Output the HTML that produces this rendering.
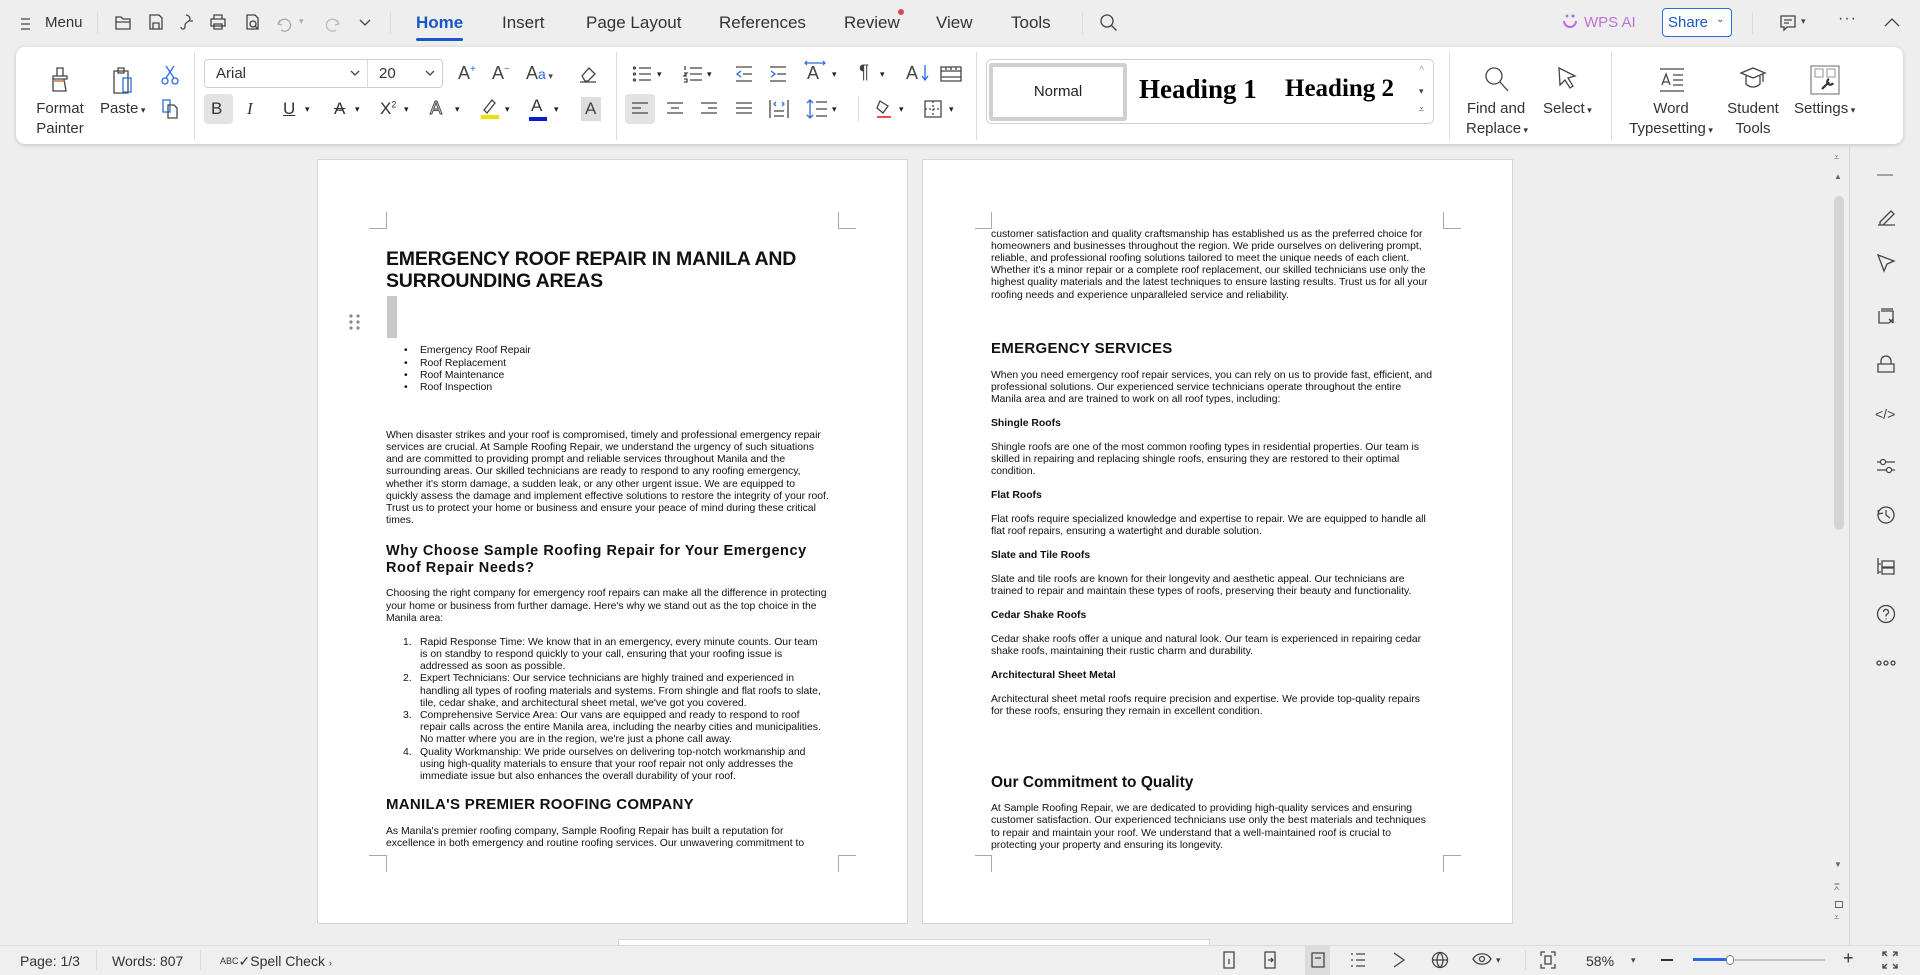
<!DOCTYPE html>
<html><head><meta charset="utf-8"><style>
*{margin:0;padding:0;box-sizing:border-box}
body{width:1920px;height:975px;overflow:hidden;background:#eeeeee;font-family:"Liberation Sans",Arial,sans-serif;color:#222;position:relative}
.a{position:absolute;white-space:nowrap}
.tab{position:absolute;top:13px;font-size:17px;color:#333;line-height:20px}
.rib{position:absolute;left:16px;top:47px;width:1887px;height:97px;background:#fff;border-radius:9px;box-shadow:0 1px 4px rgba(0,0,0,.18)}
.sep{position:absolute;width:1px;background:#dcdcdc}
.lbl{position:absolute;font-size:15px;color:#333;text-align:center;line-height:18px;white-space:nowrap}
.page{position:absolute;background:#fff;border:1px solid #d6d6d6;top:159px;height:765px}
.t{position:absolute;white-space:nowrap;font-size:10.4px;letter-spacing:0px;line-height:12px;color:#111}
.b{font-weight:bold;letter-spacing:0}
.h{position:absolute;white-space:nowrap;font-weight:bold;color:#111}
.cv{position:absolute;background:#a8a8a8}
svg{position:absolute;overflow:visible}
.ic{fill:none;stroke:#444;stroke-width:1.3}
.st{position:absolute;top:952px;font-size:14px;color:#333;line-height:18px}
</style></head><body>

<!-- top bar -->
<svg style="left:20px;top:17px" width="12" height="14" class="ic"><path d="M1 2h9M1 7h9M1 12h9"/></svg>
<div class="a" style="left:45px;top:14px;font-size:15px;color:#333">Menu</div>
<div class="sep" style="left:97px;top:12px;height:22px"></div>
<svg style="left:114px;top:14px" width="18" height="18" class="ic"><path d="M2 3h5l2 2h7v10H2z M2 8h14"/></svg>
<svg style="left:147px;top:13px" width="18" height="18" class="ic"><path d="M3 2h9l3 3v11H3z M6 10h6v6H6z"/></svg>
<svg style="left:178px;top:13px" width="18" height="18" class="ic"><path d="M8 2a4 4 0 0 1 4 4c0 3-5 3-5 6v2a2 2 0 0 1-4 0 M12 8h3"/></svg>
<svg style="left:209px;top:13px" width="18" height="18" class="ic"><path d="M5 2h8v4H5z M2 6h14v7H2z M5 11h8v5H5z"/></svg>
<svg style="left:243px;top:13px" width="18" height="18" class="ic"><path d="M4 2h8l3 3v11H4z"/><circle cx="10" cy="11" r="3"/><path d="M12 13l3 3"/></svg>
<svg style="left:276px;top:14px" width="18" height="18"><path d="M4 6l-2 4 4 1 M3 9a6 6 0 1 1 2 7" fill="none" stroke="#aaa" stroke-width="1.3"/></svg>
<div class="a" style="left:299px;top:16px;font-size:9px;color:#aaa">▾</div>
<svg style="left:323px;top:14px" width="18" height="18"><path d="M14 6l2 4-4 1 M15 9a6 6 0 1 0-2 7" fill="none" stroke="#bbb" stroke-width="1.3"/></svg>
<svg style="left:359px;top:19px" width="12" height="8" class="ic"><path d="M1 1l5 5 5-5"/></svg>
<div class="sep" style="left:390px;top:12px;height:22px"></div>
<div class="tab" style="left:416px;color:#1a56c8;font-weight:bold">Home</div>
<div class="a" style="left:416px;top:38px;width:47px;height:3px;background:#1a56c8;border-radius:2px"></div>
<div class="tab" style="left:502px">Insert</div>
<div class="tab" style="left:586px">Page Layout</div>
<div class="tab" style="left:719px">References</div>
<div class="tab" style="left:844px">Review</div>
<div class="a" style="left:898px;top:9px;width:6px;height:6px;border-radius:3px;background:#e04848"></div>
<div class="tab" style="left:936px">View</div>
<div class="tab" style="left:1011px">Tools</div>
<div class="sep" style="left:1082px;top:12px;height:22px"></div>
<svg style="left:1100px;top:14px" width="18" height="18" class="ic"><circle cx="7" cy="7" r="6"/><path d="M11.5 11.5l5 5"/></svg>
<svg style="left:1562px;top:13px" width="16" height="18"><circle cx="5" cy="3" r="1.5" fill="#d46ad8"/><circle cx="11" cy="3" r="1.5" fill="#a36ae0"/><path d="M2 8a6 6 0 0 0 12 0" fill="none" stroke="#c06ae0" stroke-width="2"/></svg>
<div class="a" style="left:1584px;top:14px;font-size:15px;color:#c070d8">WPS AI</div>
<div class="a" style="left:1662px;top:8px;width:70px;height:29px;border:1px solid #2a6be0;border-radius:4px;background:#fff"></div>
<div class="a" style="left:1668px;top:14px;font-size:15px;color:#1a56c8">Share</div>
<div class="a" style="left:1716px;top:14px;font-size:10px;color:#1a56c8">⌄</div>
<div class="sep" style="left:1752px;top:12px;height:22px"></div>
<svg style="left:1779px;top:14px" width="18" height="18" class="ic"><path d="M2 2h14v11H8l-3 3v-3H2z M5 6h8M5 9h5"/></svg>
<div class="a" style="left:1801px;top:16px;font-size:9px;color:#444">▾</div>
<div class="a" style="left:1838px;top:10px;font-size:16px;color:#444;letter-spacing:1px">···</div>
<svg style="left:1884px;top:17px" width="16" height="10" class="ic"><path d="M1 9l7-7 7 7"/></svg>

<!-- ribbon -->
<div class="rib"></div>
<svg style="left:48px;top:66px" width="24" height="28" class="ic"><path d="M9 2h6v8H9z M5 10h14v3H5z M5 13v12h13l-2-12" /><path d="M6 15h11" stroke="#c0622a"/></svg>
<div class="lbl" style="left:30px;top:100px;width:60px">Format</div>
<div class="lbl" style="left:30px;top:120px;width:60px">Painter</div>
<svg style="left:110px;top:66px" width="26" height="30" class="ic"><path d="M4 5h14v22H4z M8 2h6v5H8z"/><path d="M13 12h8v14h-8z" stroke="#2a6be0"/></svg>
<div class="lbl" style="left:100px;top:100px">Paste<span style="font-size:9px"> ▾</span></div>
<svg style="left:160px;top:64px" width="20" height="22" fill="none" stroke="#2a6be0" stroke-width="1.3"><circle cx="5" cy="17" r="3"/><circle cx="15" cy="17" r="3"/><path d="M6 14L14 2M14 14L6 2"/></svg>
<svg style="left:160px;top:98px" width="20" height="22" class="ic"><path d="M3 2h7v12H3z" stroke="#2a6be0"/><path d="M8 7h6l3 3v10H8z"/></svg>
<div class="sep" style="left:194px;top:52px;height:88px"></div>
<div class="a" style="left:204px;top:59px;width:239px;height:29px;border:1px solid #cfcfcf;border-radius:4px"></div>
<div class="sep" style="left:367px;top:60px;height:27px"></div>
<div class="a" style="left:216px;top:65px;font-size:15px;color:#333">Arial</div>
<div class="a" style="left:379px;top:65px;font-size:15px;color:#333">20</div>
<svg style="left:350px;top:70px" width="10" height="6" class="ic"><path d="M1 1l4 4 4-4"/></svg>
<svg style="left:425px;top:70px" width="10" height="6" class="ic"><path d="M1 1l4 4 4-4"/></svg>
<div class="a" style="left:458px;top:63px;font-size:18px;color:#444">A<sup style="font-size:10px;color:#2a6be0">+</sup></div>
<div class="a" style="left:492px;top:63px;font-size:18px;color:#444">A<sup style="font-size:10px;color:#2a6be0">−</sup></div>
<div class="a" style="left:526px;top:63px;font-size:18px;color:#444">A<span style="font-size:14px;color:#2a6be0">a</span><span style="font-size:9px"> ▾</span></div>
<svg style="left:578px;top:64px" width="20" height="20" class="ic"><path d="M4 12l7-8 6 6-7 7H7z M2 18h16"/></svg>
<div class="a" style="left:204px;top:94px;width:29px;height:30px;background:#e3e3e3;border-radius:4px"></div>
<div class="a" style="left:211px;top:99px;font-size:17px;color:#333">B</div>
<div class="a" style="left:247px;top:99px;font-size:17px;color:#333;font-style:italic;font-family:'Liberation Serif',serif">I</div>
<div class="a" style="left:283px;top:99px;font-size:17px;color:#333;text-decoration:underline">U</div><div class="a" style="left:305px;top:104px;font-size:9px">▾</div>
<div class="a" style="left:334px;top:99px;font-size:17px;color:#333;text-decoration:line-through">A</div><div class="a" style="left:355px;top:104px;font-size:9px">▾</div>
<div class="a" style="left:380px;top:99px;font-size:17px;color:#333">X<sup style="font-size:9px">2</sup></div><div class="a" style="left:404px;top:104px;font-size:9px">▾</div>
<div class="a" style="left:430px;top:98px;font-size:18px;color:#fff;-webkit-text-stroke:1px #444">A</div><div class="a" style="left:455px;top:104px;font-size:9px">▾</div>
<svg style="left:480px;top:96px" width="20" height="24" class="ic"><path d="M4 14l8-10 3 3-8 10z"/><rect x="1" y="19" width="18" height="4" fill="#f0e000" stroke="none"/></svg><div class="a" style="left:505px;top:104px;font-size:9px">▾</div>
<div class="a" style="left:531px;top:96px;font-size:17px;color:#333">A</div><div class="a" style="left:529px;top:117px;width:18px;height:4px;background:#0a1ec8"></div><div class="a" style="left:554px;top:104px;font-size:9px">▾</div>
<div class="a" style="left:581px;top:97px;width:20px;height:24px;background:#ddd"></div><div class="a" style="left:585px;top:99px;font-size:17px;color:#444">A</div>
<div class="sep" style="left:616px;top:52px;height:88px"></div>
<svg style="left:632px;top:65px" width="20" height="18" class="ic"><path d="M7 3h12M7 9h12M7 15h12"/><circle cx="2.5" cy="3" r="1" /><circle cx="2.5" cy="9" r="1"/><circle cx="2.5" cy="15" r="1"/></svg><div class="a" style="left:657px;top:69px;font-size:9px">▾</div>
<svg style="left:683px;top:65px" width="20" height="18" class="ic"><path d="M7 3h12M7 9h12M7 15h12M2 1v4M1 8h3l-3 3h3M1 14h3v3H1"/></svg><div class="a" style="left:707px;top:69px;font-size:9px">▾</div>
<svg style="left:734px;top:65px" width="20" height="18" class="ic"><path d="M2 2h16M9 9h9M2 16h16"/><path d="M7 6l-4 3 4 3" stroke="#2a6be0"/></svg>
<svg style="left:768px;top:65px" width="20" height="18" class="ic"><path d="M2 2h16M9 9h9M2 16h16"/><path d="M3 6l4 3-4 3" stroke="#2a6be0"/></svg>
<div class="a" style="left:807px;top:63px;font-size:18px;color:#444">A</div><svg style="left:804px;top:60px" width="22" height="6"><path d="M1 3h20M3 1L1 3l2 2M19 1l2 2-2 2" fill="none" stroke="#2a6be0" stroke-width="1.2"/></svg><div class="a" style="left:832px;top:69px;font-size:9px">▾</div>
<div class="a" style="left:859px;top:62px;font-size:19px;color:#444">¶</div><div class="a" style="left:880px;top:69px;font-size:9px">▾</div>
<div class="a" style="left:906px;top:63px;font-size:18px;color:#444">A</div><svg style="left:921px;top:64px" width="8" height="18"><path d="M4 1v15M1 12l3 4 3-4" fill="none" stroke="#2a6be0" stroke-width="1.3"/></svg>
<svg style="left:940px;top:66px" width="22" height="16" class="ic"><path d="M1 1h20v14H1z M1 5h20M1 11h20M6 1v3M11 1v3M16 1v3"/></svg>
<div class="a" style="left:625px;top:94px;width:30px;height:30px;background:#e3e3e3;border-radius:4px"></div>
<svg style="left:631px;top:101px" width="18" height="16" class="ic"><path d="M1 2h16M1 7h9M1 12h16"/></svg>
<svg style="left:666px;top:101px" width="18" height="16" class="ic"><path d="M1 2h16M5 7h8M1 12h16"/></svg>
<svg style="left:700px;top:101px" width="18" height="16" class="ic"><path d="M1 2h16M8 7h9M1 12h16"/></svg>
<svg style="left:735px;top:101px" width="18" height="16" class="ic"><path d="M1 2h16M1 7h16M1 12h16"/></svg>
<svg style="left:769px;top:99px" width="20" height="20" class="ic"><path d="M1 1v18M19 1v18M5 12h10M5 17h10"/><path d="M7 3L5 5l2 2M13 3l2 2-2 2" stroke="#2a6be0"/></svg>
<svg style="left:806px;top:98px" width="22" height="22" class="ic"><path d="M10 4h11M10 11h11M10 18h11"/><path d="M4 2v18M1 5l3-3 3 3M1 17l3 3 3-3" stroke="#2a6be0"/></svg><div class="a" style="left:832px;top:104px;font-size:9px">▾</div>
<div class="sep" style="left:858px;top:96px;height:26px"></div>
<svg style="left:874px;top:98px" width="20" height="22" class="ic"><path d="M6 3l8 5-5 7-6-5z"/><path d="M3 19h14" stroke="#e05050" stroke-width="2"/></svg><div class="a" style="left:899px;top:104px;font-size:9px">▾</div>
<svg style="left:924px;top:100px" width="18" height="18" class="ic"><path d="M1 1h16v16H1z"/><path d="M9 1v16M1 9h16" stroke-dasharray="2 2"/></svg><div class="a" style="left:949px;top:104px;font-size:9px">▾</div>
<div class="sep" style="left:976px;top:52px;height:88px"></div>
<div class="a" style="left:986px;top:59px;width:448px;height:65px;border:1px solid #d0d0d0;border-radius:5px"></div>
<div class="a" style="left:989px;top:63px;width:138px;height:58px;border:4px solid #d0d0d0;border-radius:3px"></div>
<div class="a" style="left:989px;top:83px;width:138px;text-align:center;font-size:15px;color:#222">Normal</div>
<div class="a" style="left:1139px;top:74px;font-family:'Liberation Serif',serif;font-weight:bold;font-size:27px;color:#000">Heading 1</div>
<div class="a" style="left:1285px;top:75px;font-family:'Liberation Serif',serif;font-weight:bold;font-size:25px;color:#000">Heading 2</div>
<div class="a" style="left:1419px;top:63px;font-size:9px;color:#999">˄</div>
<div class="a" style="left:1419px;top:86px;font-size:9px;color:#444">▾</div>
<div class="a" style="left:1419px;top:104px;font-size:9px;color:#444">⩡</div>
<div class="sep" style="left:1449px;top:52px;height:88px"></div>
<svg style="left:1484px;top:66px" width="26" height="28" class="ic"><circle cx="10" cy="10" r="8"/><path d="M16 16l8 9"/></svg>
<div class="lbl" style="left:1466px;top:100px;width:60px">Find and</div>
<div class="lbl" style="left:1466px;top:120px;width:60px">Replace<span style="font-size:9px"> ▾</span></div>
<svg style="left:1557px;top:66px" width="22" height="26" class="ic"><path d="M2 2l16 8-7 2 5 8-3 2-5-8-5 5z"/></svg>
<div class="lbl" style="left:1543px;top:100px">Select<span style="font-size:9px"> ▾</span></div>
<div class="sep" style="left:1611px;top:52px;height:88px"></div>
<svg style="left:1659px;top:67px" width="26" height="26" class="ic"><path d="M1 2h24M1 24h24M14 8h10M14 13h10M14 18h10"/><path d="M3 18l4-11 4 11M4 15h6"/></svg>
<div class="lbl" style="left:1631px;top:100px;width:80px">Word</div>
<div class="lbl" style="left:1626px;top:120px;width:90px">Typesetting<span style="font-size:9px"> ▾</span></div>
<svg style="left:1740px;top:66px" width="26" height="26" class="ic"><path d="M1 7l12-5 12 5-12 5z M6 10v8c4 4 10 4 14 0v-8 M23 8v8"/></svg>
<div class="lbl" style="left:1723px;top:100px;width:60px">Student</div>
<div class="lbl" style="left:1723px;top:120px;width:60px">Tools</div>
<svg style="left:1810px;top:65px" width="30" height="30" class="ic"><path d="M1 1h28v28H1z" stroke="#888"/><path d="M5 4h8v8H5zM17 4h8v8h-8z" stroke="#aaa"/><path d="M12 24l7-7M19 14a3 3 0 1 0 4 4" stroke="#333" stroke-width="2.2"/></svg>
<div class="lbl" style="left:1794px;top:100px">Settings<span style="font-size:9px"> ▾</span></div>

<!-- page 1 -->
<div class="page" style="left:317px;width:591px"></div>
<div class="cv" style="left:386px;top:212px;width:1px;height:17px"></div><div class="cv" style="left:369px;top:228px;width:17px;height:1px"></div>
<div class="cv" style="left:838px;top:212px;width:1px;height:17px"></div><div class="cv" style="left:838px;top:228px;width:18px;height:1px"></div>
<div class="cv" style="left:386px;top:855px;width:1px;height:17px"></div><div class="cv" style="left:369px;top:855px;width:17px;height:1px"></div>
<div class="cv" style="left:838px;top:855px;width:1px;height:17px"></div><div class="cv" style="left:838px;top:855px;width:18px;height:1px"></div>

<div class="h" style="left:386px;top:247px;font-size:19.5px;line-height:24px;letter-spacing:-0.2px">EMERGENCY ROOF REPAIR IN MANILA AND</div>
<div class="h" style="left:386px;top:269px;font-size:19.5px;line-height:24px;letter-spacing:-0.2px">SURROUNDING AREAS</div>
<div class="a" style="left:387px;top:296px;width:10px;height:42px;background:#c8c8c8"></div>
<svg style="left:349px;top:314px" width="12" height="18" fill="#888"><circle cx="2" cy="2" r="1.6"/><circle cx="9" cy="2" r="1.6"/><circle cx="2" cy="8" r="1.6"/><circle cx="9" cy="8" r="1.6"/><circle cx="2" cy="14" r="1.6"/><circle cx="9" cy="14" r="1.6"/></svg>
<div class="t" style="left:404px;top:345px">•</div><div class="t" style="left:420px;top:345px">Emergency Roof Repair</div>
<div class="t" style="left:404px;top:358px">•</div><div class="t" style="left:420px;top:358px">Roof Replacement</div>
<div class="t" style="left:404px;top:370px">•</div><div class="t" style="left:420px;top:370px">Roof Maintenance</div>
<div class="t" style="left:404px;top:382px">•</div><div class="t" style="left:420px;top:382px">Roof Inspection</div>

<div class="t" style="left:386px;top:430px">When disaster strikes and your roof is compromised, timely and professional emergency repair</div>
<div class="t" style="left:386px;top:442px">services are crucial. At Sample Roofing Repair, we understand the urgency of such situations</div>
<div class="t" style="left:386px;top:454px">and are committed to providing prompt and reliable services throughout Manila and the</div>
<div class="t" style="left:386px;top:466px">surrounding areas. Our skilled technicians are ready to respond to any roofing emergency,</div>
<div class="t" style="left:386px;top:479px">whether it's storm damage, a sudden leak, or any other urgent issue. We are equipped to</div>
<div class="t" style="left:386px;top:491px">quickly assess the damage and implement effective solutions to restore the integrity of your roof.</div>
<div class="t" style="left:386px;top:503px">Trust us to protect your home or business and ensure your peace of mind during these critical</div>
<div class="t" style="left:386px;top:515px">times.</div>

<div class="h" style="left:386px;top:543px;font-size:14.5px;line-height:16px;letter-spacing:0.55px">Why Choose Sample Roofing Repair for Your Emergency</div>
<div class="h" style="left:386px;top:560px;font-size:14.5px;line-height:16px;letter-spacing:0.55px">Roof Repair Needs?</div>

<div class="t" style="left:386px;top:588px">Choosing the right company for emergency roof repairs can make all the difference in protecting</div>
<div class="t" style="left:386px;top:601px">your home or business from further damage. Here's why we stand out as the top choice in the</div>
<div class="t" style="left:386px;top:613px">Manila area:</div>

<div class="t" style="left:403px;top:637px">1.</div><div class="t" style="left:420px;top:637px">Rapid Response Time: We know that in an emergency, every minute counts. Our team</div>
<div class="t" style="left:420px;top:649px">is on standby to respond quickly to your call, ensuring that your roofing issue is</div>
<div class="t" style="left:420px;top:661px">addressed as soon as possible.</div>
<div class="t" style="left:403px;top:673px">2.</div><div class="t" style="left:420px;top:673px">Expert Technicians: Our service technicians are highly trained and experienced in</div>
<div class="t" style="left:420px;top:686px">handling all types of roofing materials and systems. From shingle and flat roofs to slate,</div>
<div class="t" style="left:420px;top:698px">tile, cedar shake, and architectural sheet metal, we've got you covered.</div>
<div class="t" style="left:403px;top:710px">3.</div><div class="t" style="left:420px;top:710px">Comprehensive Service Area: Our vans are equipped and ready to respond to roof</div>
<div class="t" style="left:420px;top:722px">repair calls across the entire Manila area, including the nearby cities and municipalities.</div>
<div class="t" style="left:420px;top:734px">No matter where you are in the region, we're just a phone call away.</div>
<div class="t" style="left:403px;top:747px">4.</div><div class="t" style="left:420px;top:747px">Quality Workmanship: We pride ourselves on delivering top-notch workmanship and</div>
<div class="t" style="left:420px;top:759px">using high-quality materials to ensure that your roof repair not only addresses the</div>
<div class="t" style="left:420px;top:771px">immediate issue but also enhances the overall durability of your roof.</div>

<div class="h" style="left:386px;top:796px;font-size:15px;line-height:18px;letter-spacing:0.3px">MANILA'S PREMIER ROOFING COMPANY</div>
<div class="t" style="left:386px;top:826px">As Manila's premier roofing company, Sample Roofing Repair has built a reputation for</div>
<div class="t" style="left:386px;top:838px">excellence in both emergency and routine roofing services. Our unwavering commitment to</div>

<!-- page 2 -->
<div class="page" style="left:922px;width:591px"></div>
<div class="cv" style="left:991px;top:212px;width:1px;height:17px"></div><div class="cv" style="left:975px;top:228px;width:17px;height:1px"></div>
<div class="cv" style="left:1443px;top:212px;width:1px;height:17px"></div><div class="cv" style="left:1443px;top:228px;width:18px;height:1px"></div>
<div class="cv" style="left:991px;top:855px;width:1px;height:17px"></div><div class="cv" style="left:975px;top:855px;width:17px;height:1px"></div>
<div class="cv" style="left:1443px;top:855px;width:1px;height:17px"></div><div class="cv" style="left:1443px;top:855px;width:18px;height:1px"></div>

<div class="t" style="left:991px;top:229px">customer satisfaction and quality craftsmanship has established us as the preferred choice for</div>
<div class="t" style="left:991px;top:241px">homeowners and businesses throughout the region. We pride ourselves on delivering prompt,</div>
<div class="t" style="left:991px;top:253px">reliable, and professional roofing solutions tailored to meet the unique needs of each client.</div>
<div class="t" style="left:991px;top:265px">Whether it's a minor repair or a complete roof replacement, our skilled technicians use only the</div>
<div class="t" style="left:991px;top:277px">highest quality materials and the latest techniques to ensure lasting results. Trust us for all your</div>
<div class="t" style="left:991px;top:290px">roofing needs and experience unparalleled service and reliability.</div>

<div class="h" style="left:991px;top:340px;font-size:15px;line-height:18px;letter-spacing:0.3px">EMERGENCY SERVICES</div>
<div class="t" style="left:991px;top:370px">When you need emergency roof repair services, you can rely on us to provide fast, efficient, and</div>
<div class="t" style="left:991px;top:382px">professional solutions. Our experienced service technicians operate throughout the entire</div>
<div class="t" style="left:991px;top:394px">Manila area and are trained to work on all roof types, including:</div>
<div class="t b" style="left:991px;top:418px">Shingle Roofs</div>
<div class="t" style="left:991px;top:442px">Shingle roofs are one of the most common roofing types in residential properties. Our team is</div>
<div class="t" style="left:991px;top:454px">skilled in repairing and replacing shingle roofs, ensuring they are restored to their optimal</div>
<div class="t" style="left:991px;top:466px">condition.</div>
<div class="t b" style="left:991px;top:490px">Flat Roofs</div>
<div class="t" style="left:991px;top:514px">Flat roofs require specialized knowledge and expertise to repair. We are equipped to handle all</div>
<div class="t" style="left:991px;top:526px">flat roof repairs, ensuring a watertight and durable solution.</div>
<div class="t b" style="left:991px;top:550px">Slate and Tile Roofs</div>
<div class="t" style="left:991px;top:574px">Slate and tile roofs are known for their longevity and aesthetic appeal. Our technicians are</div>
<div class="t" style="left:991px;top:586px">trained to repair and maintain these types of roofs, preserving their beauty and functionality.</div>
<div class="t b" style="left:991px;top:610px">Cedar Shake Roofs</div>
<div class="t" style="left:991px;top:634px">Cedar shake roofs offer a unique and natural look. Our team is experienced in repairing cedar</div>
<div class="t" style="left:991px;top:646px">shake roofs, maintaining their rustic charm and durability.</div>
<div class="t b" style="left:991px;top:670px">Architectural Sheet Metal</div>
<div class="t" style="left:991px;top:694px">Architectural sheet metal roofs require precision and expertise. We provide top-quality repairs</div>
<div class="t" style="left:991px;top:706px">for these roofs, ensuring they remain in excellent condition.</div>

<div class="h" style="left:991px;top:774px;font-size:15.5px;line-height:18px">Our Commitment to Quality</div>
<div class="t" style="left:991px;top:803px">At Sample Roofing Repair, we are dedicated to providing high-quality services and ensuring</div>
<div class="t" style="left:991px;top:815px">customer satisfaction. Our experienced technicians use only the best materials and techniques</div>
<div class="t" style="left:991px;top:828px">to repair and maintain your roof. We understand that a well-maintained roof is crucial to</div>
<div class="t" style="left:991px;top:840px">protecting your property and ensuring its longevity.</div>

<!-- bottom page strip -->
<div class="a" style="left:618px;top:939px;width:592px;height:7px;background:#fff;border:1px solid #d6d6d6;border-bottom:none"></div>

<!-- scrollbar & sidebar -->
<div class="a" style="left:1834px;top:196px;width:10px;height:334px;background:#d4d4d4;border-radius:5px"></div>
<div class="a" style="left:1834px;top:152px;font-size:9px;color:#666">⩡</div>
<div class="a" style="left:1834px;top:172px;font-size:8px;color:#666">▲</div>
<div class="a" style="left:1834px;top:860px;font-size:8px;color:#666">▼</div>
<div class="a" style="left:1834px;top:882px;font-size:9px;color:#666">⩞</div>
<div class="a" style="left:1835px;top:901px;width:8px;height:7px;border:1.3px solid #666"></div>
<div class="a" style="left:1834px;top:912px;font-size:9px;color:#666">⩡</div>
<div class="sep" style="left:1849px;top:145px;height:800px;background:#d8d8d8"></div>
<svg style="left:1877px;top:174px" width="16" height="2"><path d="M0 1h16" stroke="#555"/></svg>
<svg style="left:1876px;top:207px" width="20" height="20" class="ic"><path d="M2 18h17M4 15l11-11 3 3-11 11H4z"/></svg>
<svg style="left:1876px;top:253px" width="20" height="20" class="ic"><path d="M2 2l16 6-7 3-3 7z"/></svg>
<svg style="left:1876px;top:306px" width="20" height="20" class="ic"><path d="M5 3h12M3 5v12h10M5 5h12v12"/><path d="M13 13l4 4M17 13l-4 4"/></svg>
<svg style="left:1876px;top:354px" width="20" height="20" class="ic"><path d="M2 10h16v8H2z M5 10V7a5 5 0 0 1 10 0v3"/></svg>
<div class="a" style="left:1875px;top:406px;font-size:14px;color:#444">&lt;/&gt;</div>
<svg style="left:1876px;top:456px" width="20" height="20" class="ic"><path d="M1 6h18M1 14h18"/><circle cx="7" cy="6" r="2.5" fill="#fff"/><circle cx="13" cy="14" r="2.5" fill="#fff"/></svg>
<svg style="left:1876px;top:505px" width="20" height="20" class="ic"><circle cx="10" cy="10" r="8"/><path d="M10 5v5l4 3M2 5l1 4 4-1"/></svg>
<svg style="left:1876px;top:556px" width="20" height="20" class="ic"><path d="M2 2v16M2 8h3M2 16h3M6 5h12v6H6zM6 12h12v6H6z"/></svg>
<svg style="left:1876px;top:604px" width="20" height="20" class="ic"><circle cx="10" cy="10" r="8.5"/><path d="M7.5 8a2.5 2.5 0 1 1 3.5 2.2c-1 .5-1 1-1 2.3M10 14.5v1"/></svg>
<svg style="left:1876px;top:660px" width="20" height="6" class="ic"><circle cx="3" cy="3" r="2"/><circle cx="10" cy="3" r="2"/><circle cx="17" cy="3" r="2"/></svg>

<!-- status bar -->
<div class="a" style="left:0;top:945px;width:1920px;height:30px;background:#efefef;border-top:1px solid #dadada"></div>
<div class="st" style="left:20px">Page: 1/3</div>
<div class="sep" style="left:96px;top:950px;height:20px"></div>
<div class="st" style="left:112px">Words: 807</div>
<div class="sep" style="left:200px;top:950px;height:20px"></div>
<div class="st" style="left:220px"><span style="font-size:9px;vertical-align:top">ABC</span>✓Spell Check <span style="font-size:9px">›</span></div>
<svg style="left:1222px;top:951px" width="14" height="18" class="ic"><path d="M2 1h10v16H2zM7 8v5"/></svg>
<svg style="left:1262px;top:951px" width="16" height="18" class="ic"><path d="M3 1h10v16H3zM6 9h5M9 7l2 2-2 2"/></svg>
<div class="a" style="left:1305px;top:945px;width:25px;height:30px;background:#dcdcdc"></div>
<svg style="left:1311px;top:952px" width="14" height="16" class="ic"><path d="M1 1h12v14H1zM4 6h6"/></svg>
<svg style="left:1350px;top:952px" width="16" height="16" class="ic"><path d="M1 2h2M6 2h9M1 8h2M6 8h9M1 14h2M6 14h9"/></svg>
<svg style="left:1392px;top:952px" width="14" height="16" class="ic"><path d="M2 1l10 7-10 7"/></svg>
<svg style="left:1431px;top:951px" width="18" height="18" class="ic"><circle cx="9" cy="9" r="7.5"/><path d="M1.5 9h15M9 1.5c-4 4-4 11 0 15M9 1.5c4 4 4 11 0 15"/></svg>
<svg style="left:1472px;top:952px" width="20" height="14" class="ic"><path d="M1 7c4-7 14-7 18 0-4 7-14 7-18 0z"/><circle cx="10" cy="7" r="2.5"/></svg>
<div class="a" style="left:1496px;top:955px;font-size:9px;color:#444">▾</div>
<div class="sep" style="left:1525px;top:950px;height:20px"></div>
<svg style="left:1540px;top:951px" width="16" height="18" class="ic"><path d="M1 5V1h4M11 1h4v4M15 13v4h-4M5 17H1v-4M5 5h6v8H5z"/></svg>
<div class="st" style="left:1586px">58%</div>
<div class="a" style="left:1631px;top:955px;font-size:9px;color:#444">▾</div>
<div class="a" style="left:1661px;top:959px;width:12px;height:2px;background:#333"></div>
<div class="a" style="left:1693px;top:959px;width:132px;height:2px;background:#c4c4c4"></div>
<div class="a" style="left:1693px;top:958px;width:37px;height:3px;background:#2a6be0"></div>
<div class="a" style="left:1726px;top:955px;width:8px;height:10px;background:#fff;border:1px solid #888;border-radius:4px"></div>
<div class="st" style="left:1843px;font-size:18px;top:949px">+</div>
<svg style="left:1882px;top:951px" width="16" height="18" class="ic"><path d="M5 1H1v4M11 1h4v4M15 13v4h-4M5 17H1v-4M1 1l4 4M15 1l-4 4M15 17l-4-4M1 17l4-4"/></svg>
</body></html>
